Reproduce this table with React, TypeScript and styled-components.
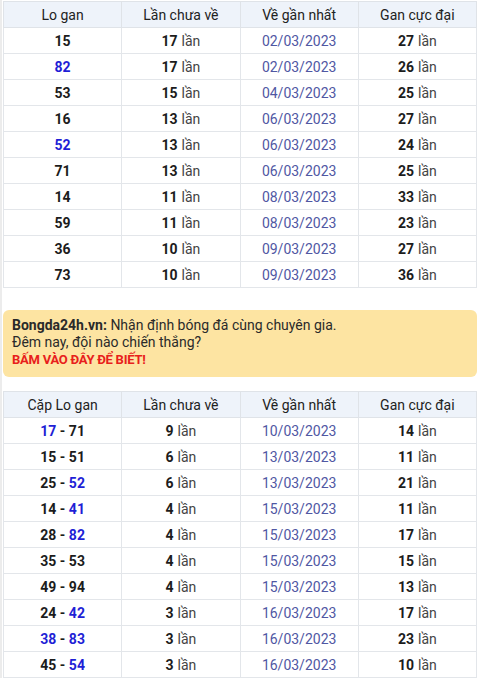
import React from "react";
import styled, { createGlobalStyle } from "styled-components";

const Global = createGlobalStyle`
  html, body { margin: 0; padding: 0; background: #fff; }
  body { font-family: Roboto, "Noto Sans", Arial, sans-serif; color: #222; }
`;

const Page = styled.div`
  width: 480px;
  box-sizing: border-box;
  padding: 1px 3px 0 3px;
  border-left: 2px solid #ececec;
  margin-left: 0;
`;

const Inner = styled.div`
  margin-left: -2px;
`;

const Table = styled.table`
  width: 474px;
  border-collapse: collapse;
  table-layout: fixed;
  font-size: 14px;
`;

const Th = styled.th`
  height: 25px;
  padding: 0;
  background: #eef3fa;
  border: 1px solid #dfe3e8;
  font-weight: 400;
  color: #222;
  text-align: center;
`;

const Td = styled.td`
  height: 25px;
  padding: 0;
  border: 1px solid #e3e6ea;
  text-align: center;
  color: #1c1c1c;
`;

const Num = styled.b<{ $blue?: boolean }>`
  font-weight: 700;
  color: ${(p) => (p.$blue ? "#1f1fd6" : "#1c1c1c")};
`;

const Unit = styled.span`
  color: #444;
  margin-left: 4px;
`;

const DateText = styled.span`
  color: #5057a3;
`;

const Banner = styled.div`
  margin: 22px 0 14px 0;
  width: 474px;
  box-sizing: border-box;
  background: #fde4a2;
  border-radius: 6px;
  padding: 7px 10px 9px 9px;
  font-size: 14px;
  line-height: 17px;
  color: #2a2a2a;
`;

const Strong = styled.b`
  font-weight: 700;
`;

const Red = styled.div`
  color: #e8201b;
  font-weight: 700;
  font-size: 13px;
  letter-spacing: -0.25px;
`;

const t1: [string, boolean, number, string, number][] = [
  ["15", false, 17, "02/03/2023", 27],
  ["82", true, 17, "02/03/2023", 26],
  ["53", false, 15, "04/03/2023", 25],
  ["16", false, 13, "06/03/2023", 27],
  ["52", true, 13, "06/03/2023", 24],
  ["71", false, 13, "06/03/2023", 25],
  ["14", false, 11, "08/03/2023", 33],
  ["59", false, 11, "08/03/2023", 23],
  ["36", false, 10, "09/03/2023", 27],
  ["73", false, 10, "09/03/2023", 36],
];

const t2: [string, boolean, string, boolean, number, string, number][] = [
  ["17", true, "71", false, 9, "10/03/2023", 14],
  ["15", false, "51", false, 6, "13/03/2023", 11],
  ["25", false, "52", true, 6, "13/03/2023", 21],
  ["14", false, "41", true, 4, "15/03/2023", 11],
  ["28", false, "82", true, 4, "15/03/2023", 17],
  ["35", false, "53", false, 4, "15/03/2023", 15],
  ["49", false, "94", false, 4, "15/03/2023", 13],
  ["24", false, "42", true, 3, "16/03/2023", 17],
  ["38", true, "83", true, 3, "16/03/2023", 23],
  ["45", false, "54", true, 3, "16/03/2023", 10],
];

const Times = ({ n }: { n: number }) => (
  <>
    <Num>{n}</Num>
    <Unit>lần</Unit>
  </>
);

export default function App() {
  return (
    <Page>
      <Global />
      <Inner>
        <Table>
          <thead>
            <tr>
              <Th>Lo gan</Th>
              <Th>Lần chưa về</Th>
              <Th>Về gần nhất</Th>
              <Th>Gan cực đại</Th>
            </tr>
          </thead>
          <tbody>
            {t1.map(([n, blue, c, d, g]) => (
              <tr key={n}>
                <Td>
                  <Num $blue={blue}>{n}</Num>
                </Td>
                <Td>
                  <Times n={c} />
                </Td>
                <Td>
                  <DateText>{d}</DateText>
                </Td>
                <Td>
                  <Times n={g} />
                </Td>
              </tr>
            ))}
          </tbody>
        </Table>

        <Banner>
          <div>
            <Strong>Bongda24h.vn:</Strong> Nhận định bóng đá cùng chuyên gia.
          </div>
          <div>Đêm nay, đội nào chiến thắng?</div>
          <Red>BẤM VÀO ĐÂY ĐỂ BIẾT!</Red>
        </Banner>

        <Table>
          <thead>
            <tr>
              <Th>Cặp Lo gan</Th>
              <Th>Lần chưa về</Th>
              <Th>Về gần nhất</Th>
              <Th>Gan cực đại</Th>
            </tr>
          </thead>
          <tbody>
            {t2.map(([a, ab, b, bb, c, d, g]) => (
              <tr key={a + b}>
                <Td>
                  <Num $blue={ab}>{a}</Num>
                  <Num> - </Num>
                  <Num $blue={bb}>{b}</Num>
                </Td>
                <Td>
                  <Times n={c} />
                </Td>
                <Td>
                  <DateText>{d}</DateText>
                </Td>
                <Td>
                  <Times n={g} />
                </Td>
              </tr>
            ))}
          </tbody>
        </Table>
      </Inner>
    </Page>
  );
}
